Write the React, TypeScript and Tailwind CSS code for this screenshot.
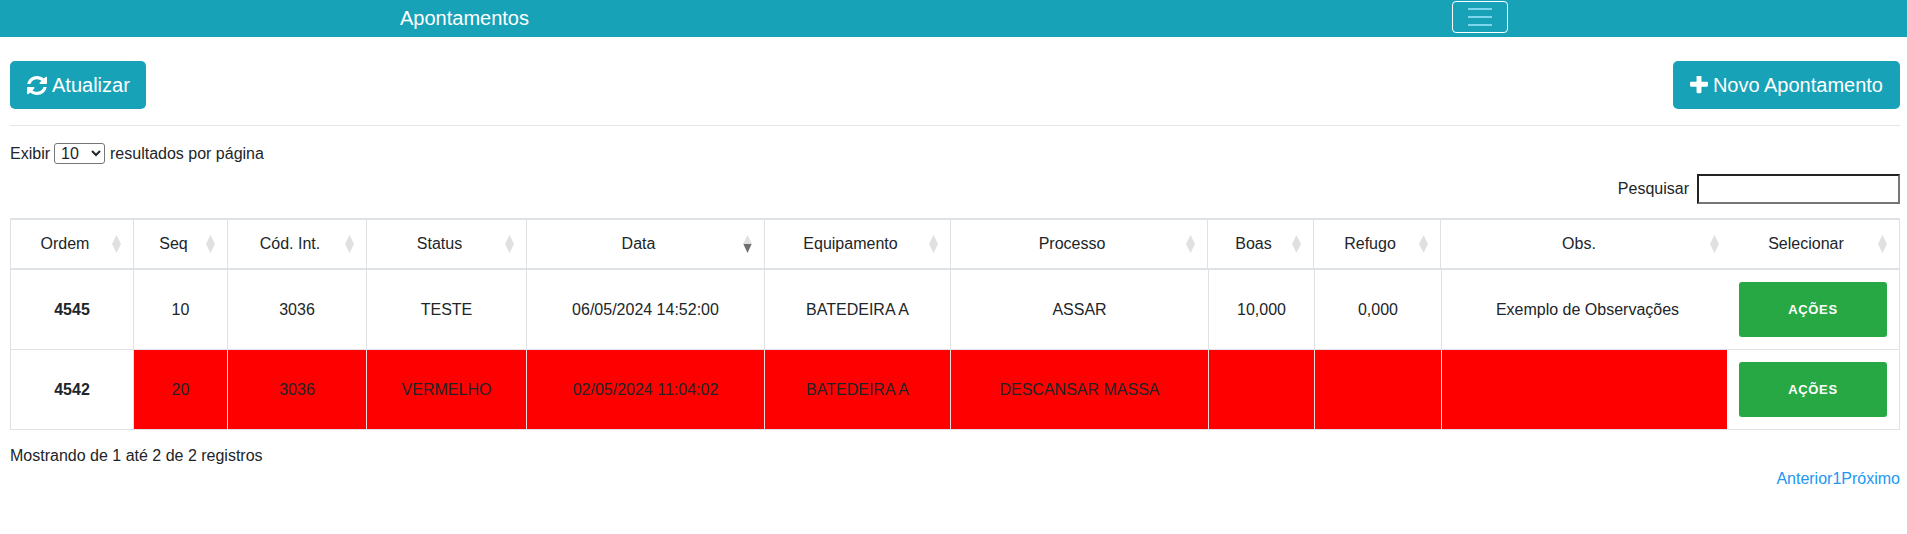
import React from 'react';

const headers = [
  { label: 'Ordem', width: 'w-[123px]' },
  { label: 'Seq', width: 'w-[94px]' },
  { label: 'Cód. Int.', width: 'w-[139px]' },
  { label: 'Status', width: 'w-[160px]' },
  { label: 'Data', width: 'w-[238px]', sorted: true },
  { label: 'Equipamento', width: 'w-[186px]' },
  { label: 'Processo', width: 'w-[257px]' },
  { label: 'Boas', width: 'w-[106px]' },
  { label: 'Refugo', width: 'w-[127px]' },
  { label: 'Obs.', width: 'w-[290px]', noBorder: true },
  { label: 'Selecionar', width: 'w-[168px]', noBorder: true, last: true },
];

const bodyWidths = [
  'w-[123px]',
  'w-[94px]',
  'w-[139px]',
  'w-[160px]',
  'w-[238px]',
  'w-[186px]',
  'w-[258px]',
  'w-[106px]',
  'w-[127px]',
  'w-[285px]',
  'w-[172px]',
];

const rows = [
  {
    ordem: '4545',
    red: false,
    cells: ['10', '3036', 'TESTE', '06/05/2024 14:52:00', 'BATEDEIRA A', 'ASSAR', '10,000', '0,000', 'Exemplo de Observações'],
  },
  {
    ordem: '4542',
    red: true,
    cells: ['20', '3036', 'VERMELHO', '02/05/2024 11:04:02', 'BATEDEIRA A', 'DESCANSAR MASSA', '', '', ''],
  },
];

const RefreshIcon = () => (
  <svg width="20" height="19" viewBox="128 128 1536 1536" preserveAspectRatio="none" fill="currentColor">
    <path d="M1639 1056q0 5-1 7-64 268-268 434.5t-478 166.5q-146 0-282.5-55t-243.5-157l-129 129q-19 19-45 19t-45-19-19-45v-448q0-26 19-45t45-19h448q26 0 45 19t19 45-19 45l-137 137q71 66 161 102t187 36q134 0 250-65t186-179q11-17 53-117 8-23 30-23h192q13 0 22.5 9.5t9.5 22.5zm25-800v448q0 26-19 45t-45 19h-448q-26 0-45-19t-19-45 19-45l138-138q-148-137-349-137-134 0-250 65t-186 179q-11 17-53 117-8 23-30 23h-199q-13 0-22.5-9.5t-9.5-22.5v-7q65-268 270-434.5t480-166.5q146 0 284 55.5t245 156.5l130-129q19-19 45-19t45 19 19 45z" />
  </svg>
);

const PlusIcon = () => (
  <svg width="18" height="18" viewBox="192 192 1408 1408" fill="currentColor">
    <path d="M1600 736v192q0 40-28 68t-68 28h-416v416q0 40-28 68t-68 28h-192q-40 0-68-28t-28-68v-416h-416q-40 0-68-28t-28-68v-192q0-40 28-68t68-28h416v-416q0-40 28-68t68-28h192q40 0 68 28t28 68v416h416q40 0 68 28t28 68z" />
  </svg>
);

// same diamond as the DataTables sort background
const SortIcon = ({ active }: { active?: boolean }) => (
  <svg width="9" height="18" viewBox="0 0 9 18" className="absolute right-[12px] top-[15px]">
    <polygon points="4.5,0 9,9 4.5,18 0,9" fill="#e0e0e0" />
    {active && <polygon points="0.5,9 8.5,9 4.5,18" fill="#6e6e6e" />}
  </svg>
);

const Colgroup = ({ widths }: { widths: string[] }) => (
  <colgroup>
    {widths.map((w, i) => (
      <col key={i} className={w} />
    ))}
  </colgroup>
);

const App = () => {
  return (
    <div className="min-h-[534px] bg-white text-[16px] leading-[20px] text-[#212529] font-['Liberation_Sans',Arial,sans-serif]">
      <nav className="h-[37px] bg-[#17a2b8] pr-[399px] pl-[400px] flex justify-between items-start">
        <span className="text-[20px] leading-[36px] text-white">Apontamentos</span>
        <button className="mt-px w-[56px] h-[32px] border border-white rounded-[4px] flex flex-col items-center justify-center gap-[6px]">
          <span className="block w-[24px] h-[2px] bg-[#7fd4ee]" />
          <span className="block w-[24px] h-[2px] bg-[#7fd4ee]" />
          <span className="block w-[24px] h-[2px] bg-[#7fd4ee]" />
        </button>
      </nav>

      <main className="pl-[10px] pr-[7px]">
        <div className="mt-[24px] flex justify-between">
          <button className="h-[48px] pl-[17px] pr-[16px] bg-[#17a2b8] text-white text-[20px] rounded-[5px] flex items-center gap-[5px]">
            <RefreshIcon />
            Atualizar
          </button>
          <button className="h-[48px] px-[17px] bg-[#17a2b8] text-white text-[20px] rounded-[5px] flex items-center gap-[5px]">
            <PlusIcon />
            Novo Apontamento
          </button>
        </div>

        <div className="mt-[16px] h-px bg-[#e5e5e5]" />

        <div className="mt-[17px] h-[21px] flex items-center">
          <span>Exibir</span>
          <select className="ml-[4px] mr-[5px] w-[51px] h-[21px] border border-[#767676] rounded-[3px] bg-white pl-[2px] text-[16px]" defaultValue="10">
            <option>10</option>
            <option>25</option>
            <option>50</option>
          </select>
          <span>resultados por página</span>
        </div>

        <div className="mt-[10px] flex justify-end items-center gap-[8px]">
          <span>Pesquisar</span>
          <input className="w-[203px] h-[30px] border-2 border-t-[#222222] border-l-[#222222] border-r-[#767676] border-b-[#767676]" />
        </div>

        <div className="mt-[14px] border-x border-b border-[#dee2e6]">
          <table className="table-fixed w-[1888px] border-separate border-spacing-0">
            <Colgroup widths={headers.map((h) => h.width)} />
            <thead>
              <tr>
                {headers.map((h) => (
                  <th
                    key={h.label}
                    className={`relative h-[52px] pl-[12px] font-normal text-center border-t-2 border-b-2 border-[#dee2e6] ${h.last ? 'pr-[30px]' : 'pr-[26px]'} ${h.noBorder ? '' : 'border-r'}`}
                  >
                    {h.label}
                    <SortIcon active={h.sorted} />
                  </th>
                ))}
              </tr>
            </thead>
          </table>
          <table className="table-fixed w-[1888px] border-separate border-spacing-0">
            <Colgroup widths={bodyWidths} />
            <tbody>
              {rows.map((row, r) => (
                <tr key={row.ordem}>
                  <td className={`text-center font-bold border-r border-[#dee2e6] ${r === 0 ? 'h-[80px] border-b' : 'h-[79px]'}`}>
                    {row.ordem}
                  </td>
                  {row.cells.map((cell, i) => (
                    <td
                      key={i}
                      className={`text-center ${i === 8 ? 'pl-[6px]' : 'border-r'} ${r === 0 ? 'h-[80px] border-b border-[#dee2e6]' : 'h-[79px] border-[#f5dcdc]'} ${row.red ? 'bg-[#ff0000]' : ''}`}
                    >
                      {cell}
                    </td>
                  ))}
                  <td className={`border-[#dee2e6] ${r === 0 ? 'h-[80px] border-b' : 'h-[79px]'}`}>
                    <button className="block ml-[12px] w-[148px] h-[55px] bg-[#28a745] rounded-[3px] text-white text-[13px] font-bold tracking-[0.7px]">
                      AÇÕES
                    </button>
                  </td>
                </tr>
              ))}
            </tbody>
          </table>
        </div>

        <div className="mt-[16px]">Mostrando de 1 até 2 de 2 registros</div>
        <div className="mt-[3px] text-right text-[#2196f3]">
          <a>Anterior</a>
          <a>1</a>
          <a>Próximo</a>
        </div>
      </main>
    </div>
  );
};

export default App;
